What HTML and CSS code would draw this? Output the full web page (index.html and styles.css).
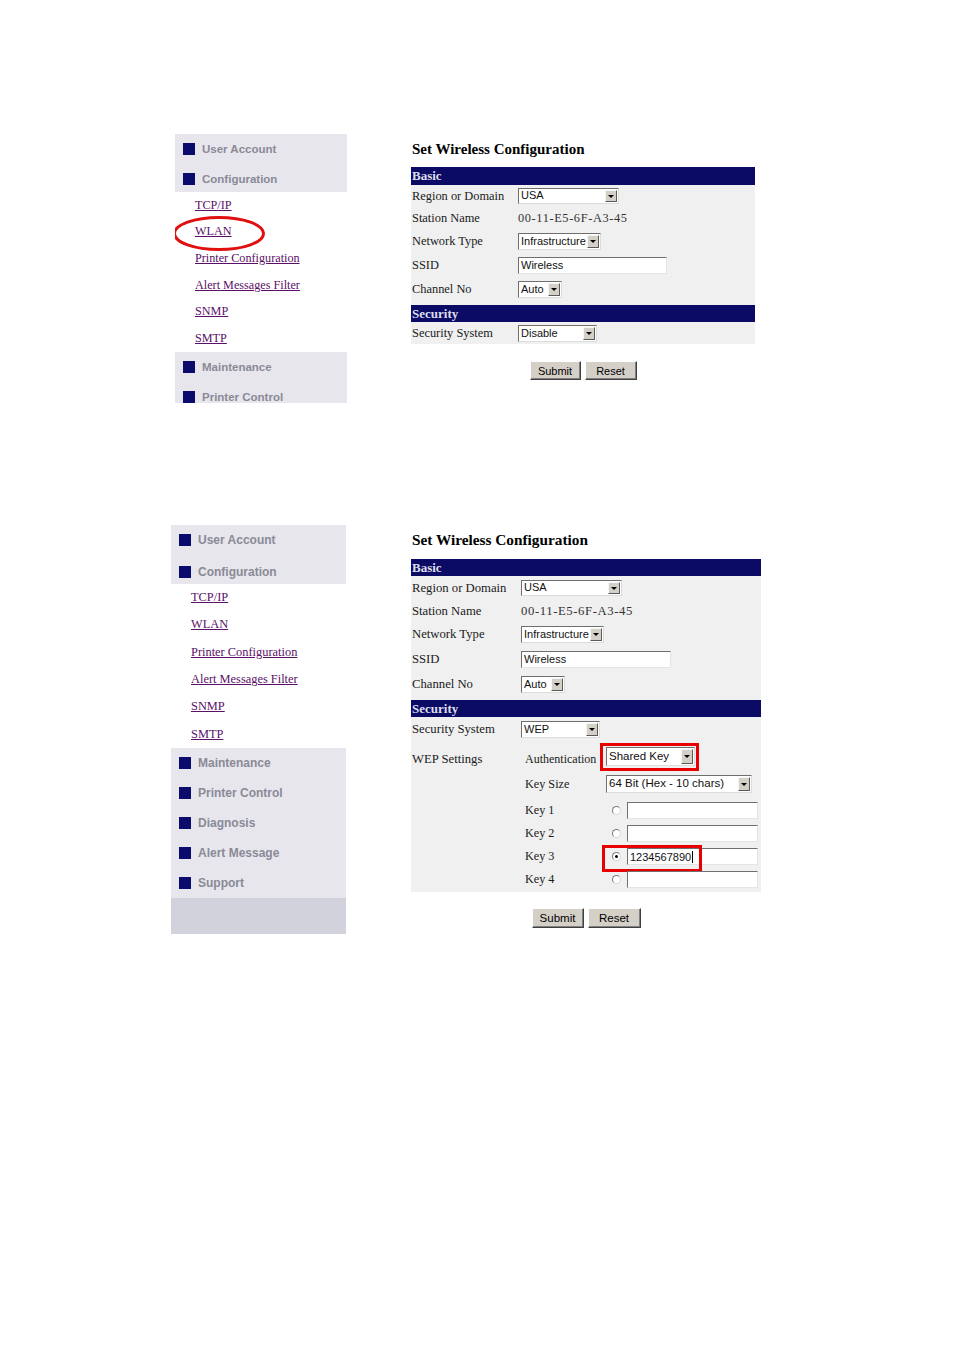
FILE: index.html
```html
<!DOCTYPE html>
<html>
<head>
<meta charset="utf-8">
<title>Set Wireless Configuration</title>
<link rel="stylesheet" href="styles.css">
</head>
<body>
<div class="page">

  <section class="shot shot1">
    <aside class="side">
      <div class="grp">
        <div class="item"><span class="sq"></span><span>User Account</span></div>
        <div class="item second"><span class="sq"></span><span>Configuration</span></div>
      </div>
      <ul class="links">
        <li><a href="#">TCP/IP</a></li>
        <li><a href="#">WLAN</a>
          <svg class="ring" width="92" height="35" viewBox="0 0 92 35"><ellipse cx="46" cy="17.5" rx="44.5" ry="16" fill="none" stroke="#e01010" stroke-width="3"/></svg>
        </li>
        <li><a href="#">Printer Configuration</a></li>
        <li><a href="#">Alert Messages Filter</a></li>
        <li><a href="#">SNMP</a></li>
        <li><a href="#">SMTP</a></li>
      </ul>
      <div class="grp">
        <div class="item"><span class="sq"></span><span>Maintenance</span></div>
        <div class="item"><span class="sq"></span><span>Printer Control</span></div>
      </div>
    </aside>

    <main class="main">
      <h2 class="title">Set Wireless Configuration</h2>
      <div class="form">
        <div class="bar">Basic</div>
        <div class="row h22"><div class="lbl">Region or Domain</div><div class="val"><span class="sel s-usa"><span class="v">USA</span><span class="arr"></span></span></div></div>
        <div class="row h22"><div class="lbl">Station Name</div><div class="val txt">00-11-E5-6F-A3-45</div></div>
        <div class="row h24"><div class="lbl">Network Type</div><div class="val"><span class="sel s-infra"><span class="v">Infrastructure</span><span class="arr"></span></span></div></div>
        <div class="row h24"><div class="lbl">SSID</div><div class="val"><span class="inp in-ssid">Wireless</span></div></div>
        <div class="row h25"><div class="lbl">Channel No</div><div class="val"><span class="sel s-auto"><span class="v">Auto</span><span class="arr"></span></span></div></div>
        <div class="bar sec">Security</div>
        <div class="row h22"><div class="lbl">Security System</div><div class="val"><span class="sel s-dis"><span class="v">Disable</span><span class="arr"></span></span></div></div>
      </div>
      <div class="btns"><button class="btn b-sub">Submit</button><button class="btn b-res">Reset</button></div>
    </main>
  </section>

  <section class="shot shot2">
    <aside class="side">
      <div class="grp">
        <div class="item"><span class="sq"></span><span>User Account</span></div>
        <div class="item second"><span class="sq"></span><span>Configuration</span></div>
      </div>
      <ul class="links">
        <li><a href="#">TCP/IP</a></li>
        <li><a href="#">WLAN</a></li>
        <li><a href="#">Printer Configuration</a></li>
        <li><a href="#">Alert Messages Filter</a></li>
        <li><a href="#">SNMP</a></li>
        <li><a href="#">SMTP</a></li>
      </ul>
      <div class="grp">
        <div class="item"><span class="sq"></span><span>Maintenance</span></div>
        <div class="item"><span class="sq"></span><span>Printer Control</span></div>
        <div class="item"><span class="sq"></span><span>Diagnosis</span></div>
        <div class="item"><span class="sq"></span><span>Alert Message</span></div>
        <div class="item"><span class="sq"></span><span>Support</span></div>
      </div>
      <div class="foot"></div>
    </aside>

    <main class="main">
      <h2 class="title">Set Wireless Configuration</h2>
      <div class="form">
        <div class="bar">Basic</div>
        <div class="row h24"><div class="lbl">Region or Domain</div><div class="val"><span class="sel s-usa"><span class="v">USA</span><span class="arr"></span></span></div></div>
        <div class="row h22"><div class="lbl">Station Name</div><div class="val txt">00-11-E5-6F-A3-45</div></div>
        <div class="row h24"><div class="lbl">Network Type</div><div class="val"><span class="sel s-infra"><span class="v">Infrastructure</span><span class="arr"></span></span></div></div>
        <div class="row h26"><div class="lbl">SSID</div><div class="val"><span class="inp in-ssid">Wireless</span></div></div>
        <div class="row h25"><div class="lbl">Channel No</div><div class="val"><span class="sel s-auto"><span class="v">Auto</span><span class="arr"></span></span></div></div>
        <div class="bar sec">Security</div>
        <div class="row h24"><div class="lbl">Security System</div><div class="val"><span class="sel s-dis"><span class="v">WEP</span><span class="arr"></span></span></div></div>
        <div class="row wep">
          <div class="lbl top">WEP Settings</div>
          <div class="sub">
            <div class="srow auth">
              <div class="slbl">Authentication</div>
              <div class="sctl"><span class="sel s-shared"><span class="v">Shared Key</span><span class="arr"></span><span class="redbox rb-auth"></span></span></div>
            </div>
            <div class="srow size">
              <div class="slbl">Key Size</div>
              <div class="sctl"><span class="sel s-size"><span class="v">64 Bit (Hex - 10 chars)</span><span class="arr"></span></span></div>
            </div>
            <div class="srow key">
              <div class="slbl">Key 1</div>
              <div class="sctl"><span class="radio"></span><span class="inp in-key"></span></div>
            </div>
            <div class="srow key">
              <div class="slbl">Key 2</div>
              <div class="sctl"><span class="radio"></span><span class="inp in-key"></span></div>
            </div>
            <div class="srow key">
              <div class="slbl">Key 3</div>
              <div class="sctl"><span class="radio on"></span><span class="inp in-key">1234567890<span class="caret"></span></span><span class="redbox rb-key"></span></div>
            </div>
            <div class="srow key">
              <div class="slbl">Key 4</div>
              <div class="sctl"><span class="radio"></span><span class="inp in-key"></span></div>
            </div>
          </div>
        </div>
      </div>
      <div class="btns"><button class="btn b-sub">Submit</button><button class="btn b-res">Reset</button></div>
    </main>
  </section>

</div>
</body>
</html>
```

FILE: styles.css
```css
* { box-sizing: border-box; }

body {
  margin: 0;
  background: #ffffff;
  font-family: "Liberation Serif", "Times New Roman", serif;
}

.page { padding-top: 134px; }

.shot { display: flex; align-items: flex-start; }
.shot1 { margin-left: 175px; gap: 64px; }
.shot2 { margin-left: 171px; gap: 65px; margin-top: 122px; }

/* ---------- sidebar ---------- */
.side {
  width: 172px;
  font-family: "Liberation Sans", Arial, sans-serif;
}
.shot1 .side { height: 269px; overflow: hidden; }
.shot2 .side { width: 175px; }

.grp { background: #e6e6ec; }

.item {
  display: flex;
  align-items: center;
  gap: 7px;
  height: 30px;
  padding-left: 8px;
  font-size: 11.5px;
  font-weight: bold;
  color: #8a8a97;
  white-space: nowrap;
}
.shot2 .item { font-size: 12px; }
.item.second { height: 28px; padding-top: 2px; }
.shot2 .item.second { height: 29px; padding-top: 4px; }

.sq {
  flex: none;
  width: 12px;
  height: 12px;
  background: #0b0b6c;
}

.links { list-style: none; margin: 0; padding: 0; background: #ffffff; }
.links li {
  position: relative;
  display: flex;
  align-items: center;
  height: 26.67px;
  padding-left: 20px;
}
.shot2 .links li { height: 27.33px; }
.links a {
  font-family: "Liberation Serif", "Times New Roman", serif;
  font-size: 12.2px;
  color: #5a1068;
  text-decoration: underline;
}
.shot2 .links a { font-size: 12.4px; }
.ring { position: absolute; left: -2px; top: -3px; }

.foot { height: 36px; background: #d2d2dc; }

/* ---------- main form ---------- */
.main { padding-top: 7px; }
.shot1 .main { width: 344px; }
.shot2 .main { width: 350px; }

.title {
  margin: 0 0 10px 1px;
  font-size: 15px;
  line-height: 16px;
  font-weight: bold;
  color: #000000;
}
.shot2 .title { margin-bottom: 11px; font-size: 15.3px; }

.form { background: #f0f0f0; }
.shot2 .form { padding-bottom: 1px; }

.bar {
  height: 18px;
  line-height: 18px;
  padding-left: 1px;
  background: #0b0b66;
  color: #dedeec;
  font-size: 13px;
  font-weight: bold;
}
.bar.sec { margin-top: 3px; height: 17px; line-height: 17px; }
.shot2 .bar { height: 17px; line-height: 17px; }

.row {
  display: flex;
  align-items: center;
  font-size: 12.4px;
  color: #1a1a1a;
}
.shot2 .row { font-size: 12.7px; }
.h22 { height: 22px; }
.h24 { height: 24px; }
.h25 { height: 25px; }
.h26 { height: 26px; }

.lbl { flex: none; width: 107px; padding-left: 1px; white-space: nowrap; }
.shot2 .lbl { width: 110px; }
.val { display: flex; align-items: center; }
.txt { color: #333333; letter-spacing: 0.6px; }

/* fake select boxes */
.sel {
  position: relative;
  display: inline-flex;
  align-items: stretch;
  height: 17px;
  background: #ffffff;
  border: 1px solid;
  border-color: #6f6f6f #dcdcdc #dcdcdc #6f6f6f;
  font-family: "Liberation Sans", Arial, sans-serif;
  font-size: 11px;
  color: #111111;
}
.sel .v {
  flex: 1;
  padding-left: 2px;
  line-height: 14px;
  white-space: nowrap;
  overflow: hidden;
}
.sel .arr {
  flex: none;
  width: 12px;
  margin: 1px;
  background: #d4d0c8;
  border: 1px solid;
  border-color: #f6f6f6 #5a5a5a #5a5a5a #f6f6f6;
  display: flex;
  align-items: center;
  justify-content: center;
}
.sel .arr::after {
  content: "";
  border-left: 3px solid transparent;
  border-right: 3px solid transparent;
  border-top: 3px solid #000000;
}

.s-usa { width: 101px; height: 16px; }
.s-usa .v { line-height: 13px; }
.s-infra { width: 83px; }
.s-auto { width: 44px; }
.s-dis { width: 79px; }
.s-shared { width: 89px; height: 19px; font-size: 11.5px; }
.s-shared .v { line-height: 16px; }
.s-size { width: 146px; height: 18px; font-size: 11.5px; }
.s-size .v { line-height: 15px; }

.inp {
  display: inline-flex;
  align-items: center;
  height: 17px;
  padding-left: 2px;
  background: #ffffff;
  border: 1px solid;
  border-color: #6f6f6f #e4e4e4 #e4e4e4 #6f6f6f;
  font-family: "Liberation Sans", Arial, sans-serif;
  font-size: 11px;
  color: #111111;
  white-space: nowrap;
}
.in-ssid { width: 149px; }
.shot2 .in-ssid { width: 150px; }
.in-key { width: 131px; margin-left: 6px; }

.caret {
  display: inline-block;
  width: 1px;
  height: 12px;
  margin-left: 1px;
  background: #000000;
}

.radio {
  flex: none;
  width: 9px;
  height: 9px;
  margin-left: 6px;
  border-radius: 50%;
  border: 1px solid;
  border-color: #7c7c7c #d8d8d8 #d8d8d8 #7c7c7c;
  background: #ffffff;
  display: inline-flex;
  align-items: center;
  justify-content: center;
}
.radio.on::after {
  content: "";
  width: 3px;
  height: 3px;
  border-radius: 50%;
  background: #000000;
}

/* WEP block */
.row.wep { align-items: flex-start; }
.lbl.top {
  height: 31px;
  padding-top: 6px;
  display: flex;
  align-items: center;
}
.sub { flex: 1; }
.srow { display: flex; align-items: center; }
.slbl { flex: none; width: 85px; padding-left: 4px; white-space: nowrap; font-size: 12.2px; }
.sctl { position: relative; display: flex; align-items: center; }

.auth { height: 31px; }
.auth .slbl { align-self: stretch; display: flex; align-items: center; padding-top: 6px; font-size: 12px; }
.size { height: 27px; padding-bottom: 3px; }
.key { height: 23px; }

/* red annotation boxes */
.redbox {
  position: absolute;
  border: 3px solid #e60000;
  pointer-events: none;
}
.rb-auth { left: -7px; top: -5px; width: 99px; height: 28px; }
.rb-key { left: -4px; top: -3px; width: 100px; height: 27px; }

/* buttons */
.btns {
  display: flex;
  justify-content: center;
  gap: 4px;
  margin-top: 17px;
}
.shot2 .btns { margin-top: 16px; }
.btn {
  height: 19px;
  padding: 0;
  background: #d4d0c8;
  border: 1px solid;
  border-color: #ffffff #404040 #404040 #ffffff;
  box-shadow: inset -1px -1px 0 #808080;
  font-family: "Liberation Sans", Arial, sans-serif;
  font-size: 11px;
  color: #000000;
}
.b-sub { width: 51px; }
.b-res { width: 52px; }
.shot2 .btn { height: 20px; font-size: 11.5px; }
.shot2 .b-sub { width: 52px; }
.shot2 .b-res { width: 53px; }
```
